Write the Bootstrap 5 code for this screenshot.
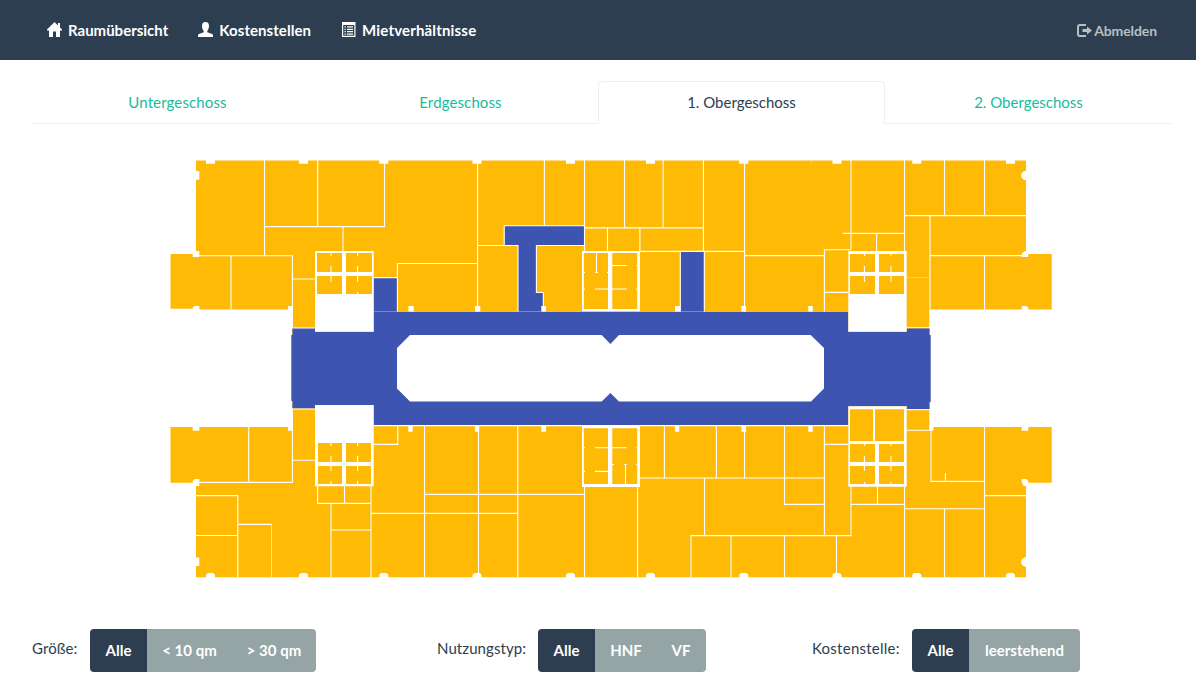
<!DOCTYPE html>
<html lang="de">
<head>
<meta charset="utf-8">
<meta name="viewport" content="width=device-width, initial-scale=1">
<title>Raumübersicht</title>
<link rel="stylesheet" href="https://cdn.jsdelivr.net/npm/bootstrap@5.3.0/dist/css/bootstrap.min.css">
<style>
  body { font-family: Lato, "Liberation Sans", sans-serif; font-size: 15px; line-height: 21px; color: #2c3e50; background: #fff; }
  .topbar { height: 60px; background: #2d3e50; padding: 0 32px; }
  .topbar .nav-link { color: #fff; font-weight: 700; padding: 20px 15px 19px; display: flex; line-height: 21px; }
  .topbar .nav-link svg { width: 15px; height: 15px; margin: 2px 6px 0 0; fill: currentColor; flex: none; }
  .topbar .wide-a { letter-spacing: .06px; }
  .topbar .wide-b { letter-spacing: .17px; }
  .topbar .signout { color: #b9bec5; font-size: 14px; padding-right: 7px; letter-spacing: -.1px; }
  .topbar .signout svg { margin: 4px 2px 0 0; height: 13px; }
  .content-area { padding: 21px 24px 0 32px; }
  .floors { display: grid; grid-template-columns: 291px 275px 287px 287px; border: 0; }
  .floors .nav-link { width: 100%; height: 43px; padding: 10px 15px; text-align: center; color: #18bc9c; margin: 0; border: 1px solid transparent; border-bottom-color: #ecf0f1; border-radius: 4px 4px 0 0; }
  .floors .nav-link.spaced { letter-spacing: .12px; }
  .floors .nav-link.active { color: #2c3e50; border-color: #ecf0f1 #ecf0f1 transparent; }
  .plan { width: 884px; height: 420px; margin: 35px 0 0 137px; }
  .room { fill: #ffba06; }
  .traffic { fill: #3d55b0; }
  .void { fill: #fff; }
  .wall { stroke: #fff; stroke-width: 1.1; fill: none; }
  .joint { stroke: #fff; stroke-width: 1; fill: none; opacity: .3; }
  .filters { display: grid; grid-template-columns: 405px 375px 1fr; margin-top: 50px; }
  .filters .lbl { line-height: 21px; padding-top: 9px; flex: none; }
  .filters .lbl-size { width: 58px; letter-spacing: .1px; }
  .filters .lbl-use { width: 101px; letter-spacing: .08px; }
  .filters .lbl-cost { width: 100px; letter-spacing: .25px; }
  .filters .btn { --bs-btn-color: #fff; --bs-btn-bg: #95a5a6; --bs-btn-border-color: transparent; --bs-btn-active-bg: #2c3e50; --bs-btn-active-border-color: transparent; --bs-btn-active-color: #fff; font-size: 15px; font-weight: 700; line-height: 21px; padding: 11px 0; border: 0; border-radius: 4px; flex: none; white-space: nowrap; }
  .filters .btn-group > .btn:not(:first-child) { margin-left: 0; }
  .w-all { width: 57px; }
  .w-lt { width: 85px; }
  .w-gt { width: 84px; }
  .w-hnf { width: 62px; }
  .w-vf { width: 49px; padding-right: 1px !important; }
  .w-free { width: 111px; }
</style>
</head>
<body>
<nav class="topbar d-flex justify-content-between">
  <div class="d-flex">
    <a class="nav-link" href="#"><svg viewBox="0 0 15 15"><path d="M7.500 0 11 3.400V1h2v4.400l2 2.100v1h-2V15H9V9.500H6V15H2V8.500H0v-1z"/></svg>Raumübersicht</a>
    <a class="nav-link wide-a" href="#"><svg viewBox="0 0 15 15"><path d="M7.500 0C9.900 0 11 1.500 11 3.900c0 2-.8 3.800-1.700 4.900v1.400L14 12c.7.300 1 .7 1 1.500V15H0v-1.500c0-.8.3-1.200 1-1.500l4.700-1.800V8.800C4.800 7.700 4 5.900 4 3.900 4 1.500 5.100 0 7.500 0z"/></svg>Kostenstellen</a>
    <a class="nav-link wide-b" href="#"><svg viewBox="0 0 15 15"><path fill-rule="evenodd" d="M1 0h13.500v15H1zM2.200 3v10.800h11.100V3zM3.500 4.300h1.300v1.200H3.500zM6 4.300h6v1.200H6zM3.500 6.700h1.300v1.200H3.500zM6 6.700h6v1.200H6zM3.500 9.100h1.300v1.200H3.500zM6 9.100h6v1.200H6zM3.500 11.500h1.300v1.200H3.500zM6 11.500h6v1.200H6z"/></svg>Mietverhältnisse</a>
  </div>
  <a class="nav-link signout" href="#"><svg viewBox="0 0 15 13"><path d="M9 0v2H3.200C2.400 2 2 2.400 2 3.200v6.600c0 .8.4 1.200 1.200 1.200H9v2H3C1 13 0 12 0 10V3C0 1 1 0 3 0zM10 2.600l5 3.900-5 3.900V8H5.500V5H10z"/></svg>Abmelden</a>
</nav>
<main class="content-area">
  <div class="nav nav-tabs floors">
    <a class="nav-link spaced" href="#">Untergeschoss</a>
    <a class="nav-link spaced" href="#">Erdgeschoss</a>
    <a class="nav-link active" href="#">1. Obergeschoss</a>
    <a class="nav-link" href="#">2. Obergeschoss</a>
  </div>

  <svg class="plan d-block" viewBox="169 159 884 420">
    <!-- rooms and corridors -->
    <path class="room" d="M196 160.600H1026V254H1051.700V309.400H929.600V427H1051.700V482.800H1026V577.300H196V482.800H170.500V427H292.400V309.500H199.300V308.700H170.500V254H196z"/>
    <path class="traffic" d="M291.300 335H292.400V328H315V331.700H373.700V278H397.300V311.700H848.300V331.700H906.700V328.300H929.500V335H930.700V402H929.500V409H906.700V406.300H848.300V425H373.700V405H315V408.500H292.400V401H291.300z"/>
    <path class="traffic" d="M504.300 226H584.300V245.500H536.300V292.500H543.300V312H518V245.500H504.300zM680.400 251.600H704V312H680.400z"/>
    <path class="void" d="M410 335H601.700L610.400 344 619 335H810.700L824 348V388.500L811 401.600H619L610.400 393 601.700 401.600H410L397 388.500V348z"/>
    <!-- walls, upper wing -->
    <path class="wall" d="M264.500 160V255.500M317.700 160V226.500M384.500 163V226.600H264.500M343 227V251M199 255.700H292.400V328H315M231 256V309.500M292 279H315M374 277.600H397.400V263.500H477.500M397.400 277V311.500M477.600 163V311.500M477.600 245.500H518V311.500M504.200 245.500V225.700H584.500M544.400 160V226M584.500 160V251M584.500 245.500H536.400V292.500H543.300V311.500"/>
    <path class="wall" d="M584.500 227.900H703.300M624.500 160V228M663.100 160V228M703.400 160V251.300M607.500 228V251M639.900 228V251M640 251.400H744.500M744.500 163V311.500M680.300 251V311.500M704.300 251V311.500M744.500 255.600H824M851 160V250M904.500 160V251M944.500 160V215.500M984.500 160V215.500M904.500 215.600H1026M930 215.500V328M930 255.600H1022M984.500 256V309.500M842.700 233.400H904M876.600 233.400V251M824.400 311.500V249.800H851M824.400 292.400H848M907 327.800H930"/>
    <!-- walls, lower wing -->
    <path class="wall" d="M292 409H315M248.700 427V482.400M199 482.400H292.400V409M292 460.200H315M196 495.600H237.800V577M196 535.500H237.800M238 524.400H271.500M317.600 486V503.400H371M344.500 486V503.400M371 486V577M331 503.400V577M331 530H371M374 425.600H848M374 444.400H397.800V425M424.500 425V577M478.500 425V577M517.800 425V577M424.500 494.400H584.500M371 513.400H517.700M584.500 487V577"/>
    <path class="wall" d="M637.600 487V577M664.400 425V478M716.400 425V478M744.500 425V478M784.500 425V504.400H824.400M640 478H824.400M704.500 478V535.500M691 577V535.600H851V487M731 535.500V577M784.500 535.500V577M824.400 425V535.500M824.400 444.400H848M836.500 535.500V574M877.500 487V504.400M851 504.400H904.500M904.500 487V577M904.500 508.800H984.500M944.500 509V577M984.500 427V577M984.500 495.600H1026M931 430V481.400H984.500M945.400 473V481.400M907 430.300H930V409M907 409.800H930"/>
    <path class="joint" d="M374 311.500H848M907 277.500H930M811 160.500V163.500"/>
    <path class="joint" style="opacity:.6" d="M271.500 524.400V577"/>
    <!-- facade piers -->
    <path class="void" d="M206 160h9v3.700h-9zM299 160h9v3.700h-9zM379.300 160h9v3.700h-9zM472.500 160h9v3.700h-9zM566 160h9v3.700h-9zM646 160h9v3.700h-9zM739.300 160h9v3.700h-9zM832.500 160h9v3.700h-9zM912.300 160h9v3.700h-9zM1006 160h9v3.700h-9z"/>
    <path class="void" d="M206 578v-3.500l2-1.500h5l2 1.500v3.500zM299 578v-3.500l2-1.500h5l2 1.500v3.500zM379.300 578v-3.500l2-1.500h5l2 1.500v3.500zM472.500 578v-3.500l2-1.500h5l2 1.500v3.500zM566 578v-3.500l2-1.500h5l2 1.500v3.500zM646 578v-3.500l2-1.500h5l2 1.500v3.500zM739.300 578v-3.500l2-1.500h5l2 1.500v3.500zM832.500 578v-3.500l2-1.500h5l2 1.500v3.500zM912.300 578v-3.500l2-1.500h5l2 1.500v3.500zM1006 578v-3.500l2-1.500h5l2 1.500v3.500z"/>
    <path class="void" d="M195 171h4.300v8.700H195zM195 557.600h4.300v8.400H195zM1027 171h-3l-2.600 2.500v4l2.600 2.500h3zM1027 557.600h-3l-2.600 2.500v4l2.600 2.500h3z"/>
    <path class="void" d="M195.500 251h3.800v6h-6.600v-3.200h2.800zM192.700 310v-2.500l2-1.500h4.600v4zM288 310.500v-4.500h4.200v4.500zM192.700 426h6.600v4.800h-6.600zM288 426h4.200v4.800H288zM192.700 483.500V481l2-2h4.600v7h-3.800v-2.500zM1027 251l-3 .5-2.300 2v3.500h6.600v-3.200H1027zM1028.300 310.500v-3l-2-1.500h-4.600v4.500zM1021.700 426h6.600v4.800h-6.600zM1028.300 483.500V481l-2-2h-4.600v3.500l2 3.500h3v-2.500zM929.600 426h4v4.600h-4z"/>
    <path class="void" d="M408.500 306h5.200v5.500h-5.200zM475 306h5.300v5.500H475zM541.300 306h4.700v5.500h-4.700zM675 306h5.200v5.500H675zM741.400 306h4.600v5.500h-4.600zM808.300 306h4.500v5.500h-4.500zM408.300 425h4.400v6.700h-4.400zM475 425h4.200v6.700H475zM541.300 425h4.700v6.700h-4.700zM675 425h4.200v6.700H675zM741.500 425h4.500v6.700h-4.500zM808.300 425h4.500v6.700h-4.500z"/>
    <!-- stair and sanitary cores -->
    <path class="void" d="M315 251h58.700v80.700H315zM848.300 251h58.400v80.700h-58.400zM315 405h58.700v81.200H315zM848.300 406.300h58.400v80.500h-58.400zM582 251h58v60.300h-58zM582 425h58v62h-58z"/>
    <path class="room" d="M317 253h25v19h-25zM346 253h26v19h-26zM317 276h25v18h-25zM346 276h26v18h-26zM850 254h25v18h-25zM879 254h25v18h-25zM850 276h25v18h-25zM879 276h25v18h-25zM318 443h24v19h-24zM346 443h25v19h-25zM318 466h24v18h-24zM346 466h25v18h-25zM850 409.300h23v31.700h-23zM875 409.300h29v31.700h-29zM850 444h25v18h-25zM879 444h25v18h-25zM850 466h25v18h-25zM879 466h25v18h-25zM583.800 253h24.200v56h-24.200zM612.300 253h24.900v56h-24.900zM583.800 428.300h24.200v55.700h-24.200zM612.300 428.300h24.900v55.700h-24.900z"/>
    <path class="wall" d="M331 253v3m0 10v6m0 4v6M357.600 253v3m0 10v6m0 4v6M864.400 254v2m0 10v6m0 4v6M891 254v2m0 10v6m0 4v6M357.600 292v2M331 443v3m0 10v6m0 4v5m0 10v3M357.600 443v3m0 10v6m0 4v5m0 10v3M864.400 444v2m0 10v6m0 4v5m0 11v2M891 444v2m0 10v6m0 4v5m0 11v2"/>
    <path class="wall" d="M596.500 253v19.500M584 272.500h1m10 0h3m9 0h1M584 289h1m10 0h13M612 289h15m9 0h1M612 265.500h15m9 0h1M584 447.800h1m10 0h13M612 447.800h15m9 0h1M584 471.400h1m10 0h13M612 464.500h2m10 0h3m9 0h1M625.500 464.500V484"/>
  </svg>

  <div class="filters">
    <div class="d-flex">
      <span class="lbl lbl-size">Größe:</span>
      <div class="btn-group"><button class="btn active w-all">Alle</button><button class="btn w-lt">&lt; 10 qm</button><button class="btn w-gt">&gt; 30 qm</button></div>
    </div>
    <div class="d-flex">
      <span class="lbl lbl-use">Nutzungstyp:</span>
      <div class="btn-group"><button class="btn active w-all">Alle</button><button class="btn w-hnf">HNF</button><button class="btn w-vf">VF</button></div>
    </div>
    <div class="d-flex">
      <span class="lbl lbl-cost">Kostenstelle:</span>
      <div class="btn-group"><button class="btn active w-all">Alle</button><button class="btn w-free">leerstehend</button></div>
    </div>
  </div>
</main>
<script src="https://cdn.jsdelivr.net/npm/bootstrap@5.3.0/dist/js/bootstrap.bundle.min.js"></script>
</body>
</html>
